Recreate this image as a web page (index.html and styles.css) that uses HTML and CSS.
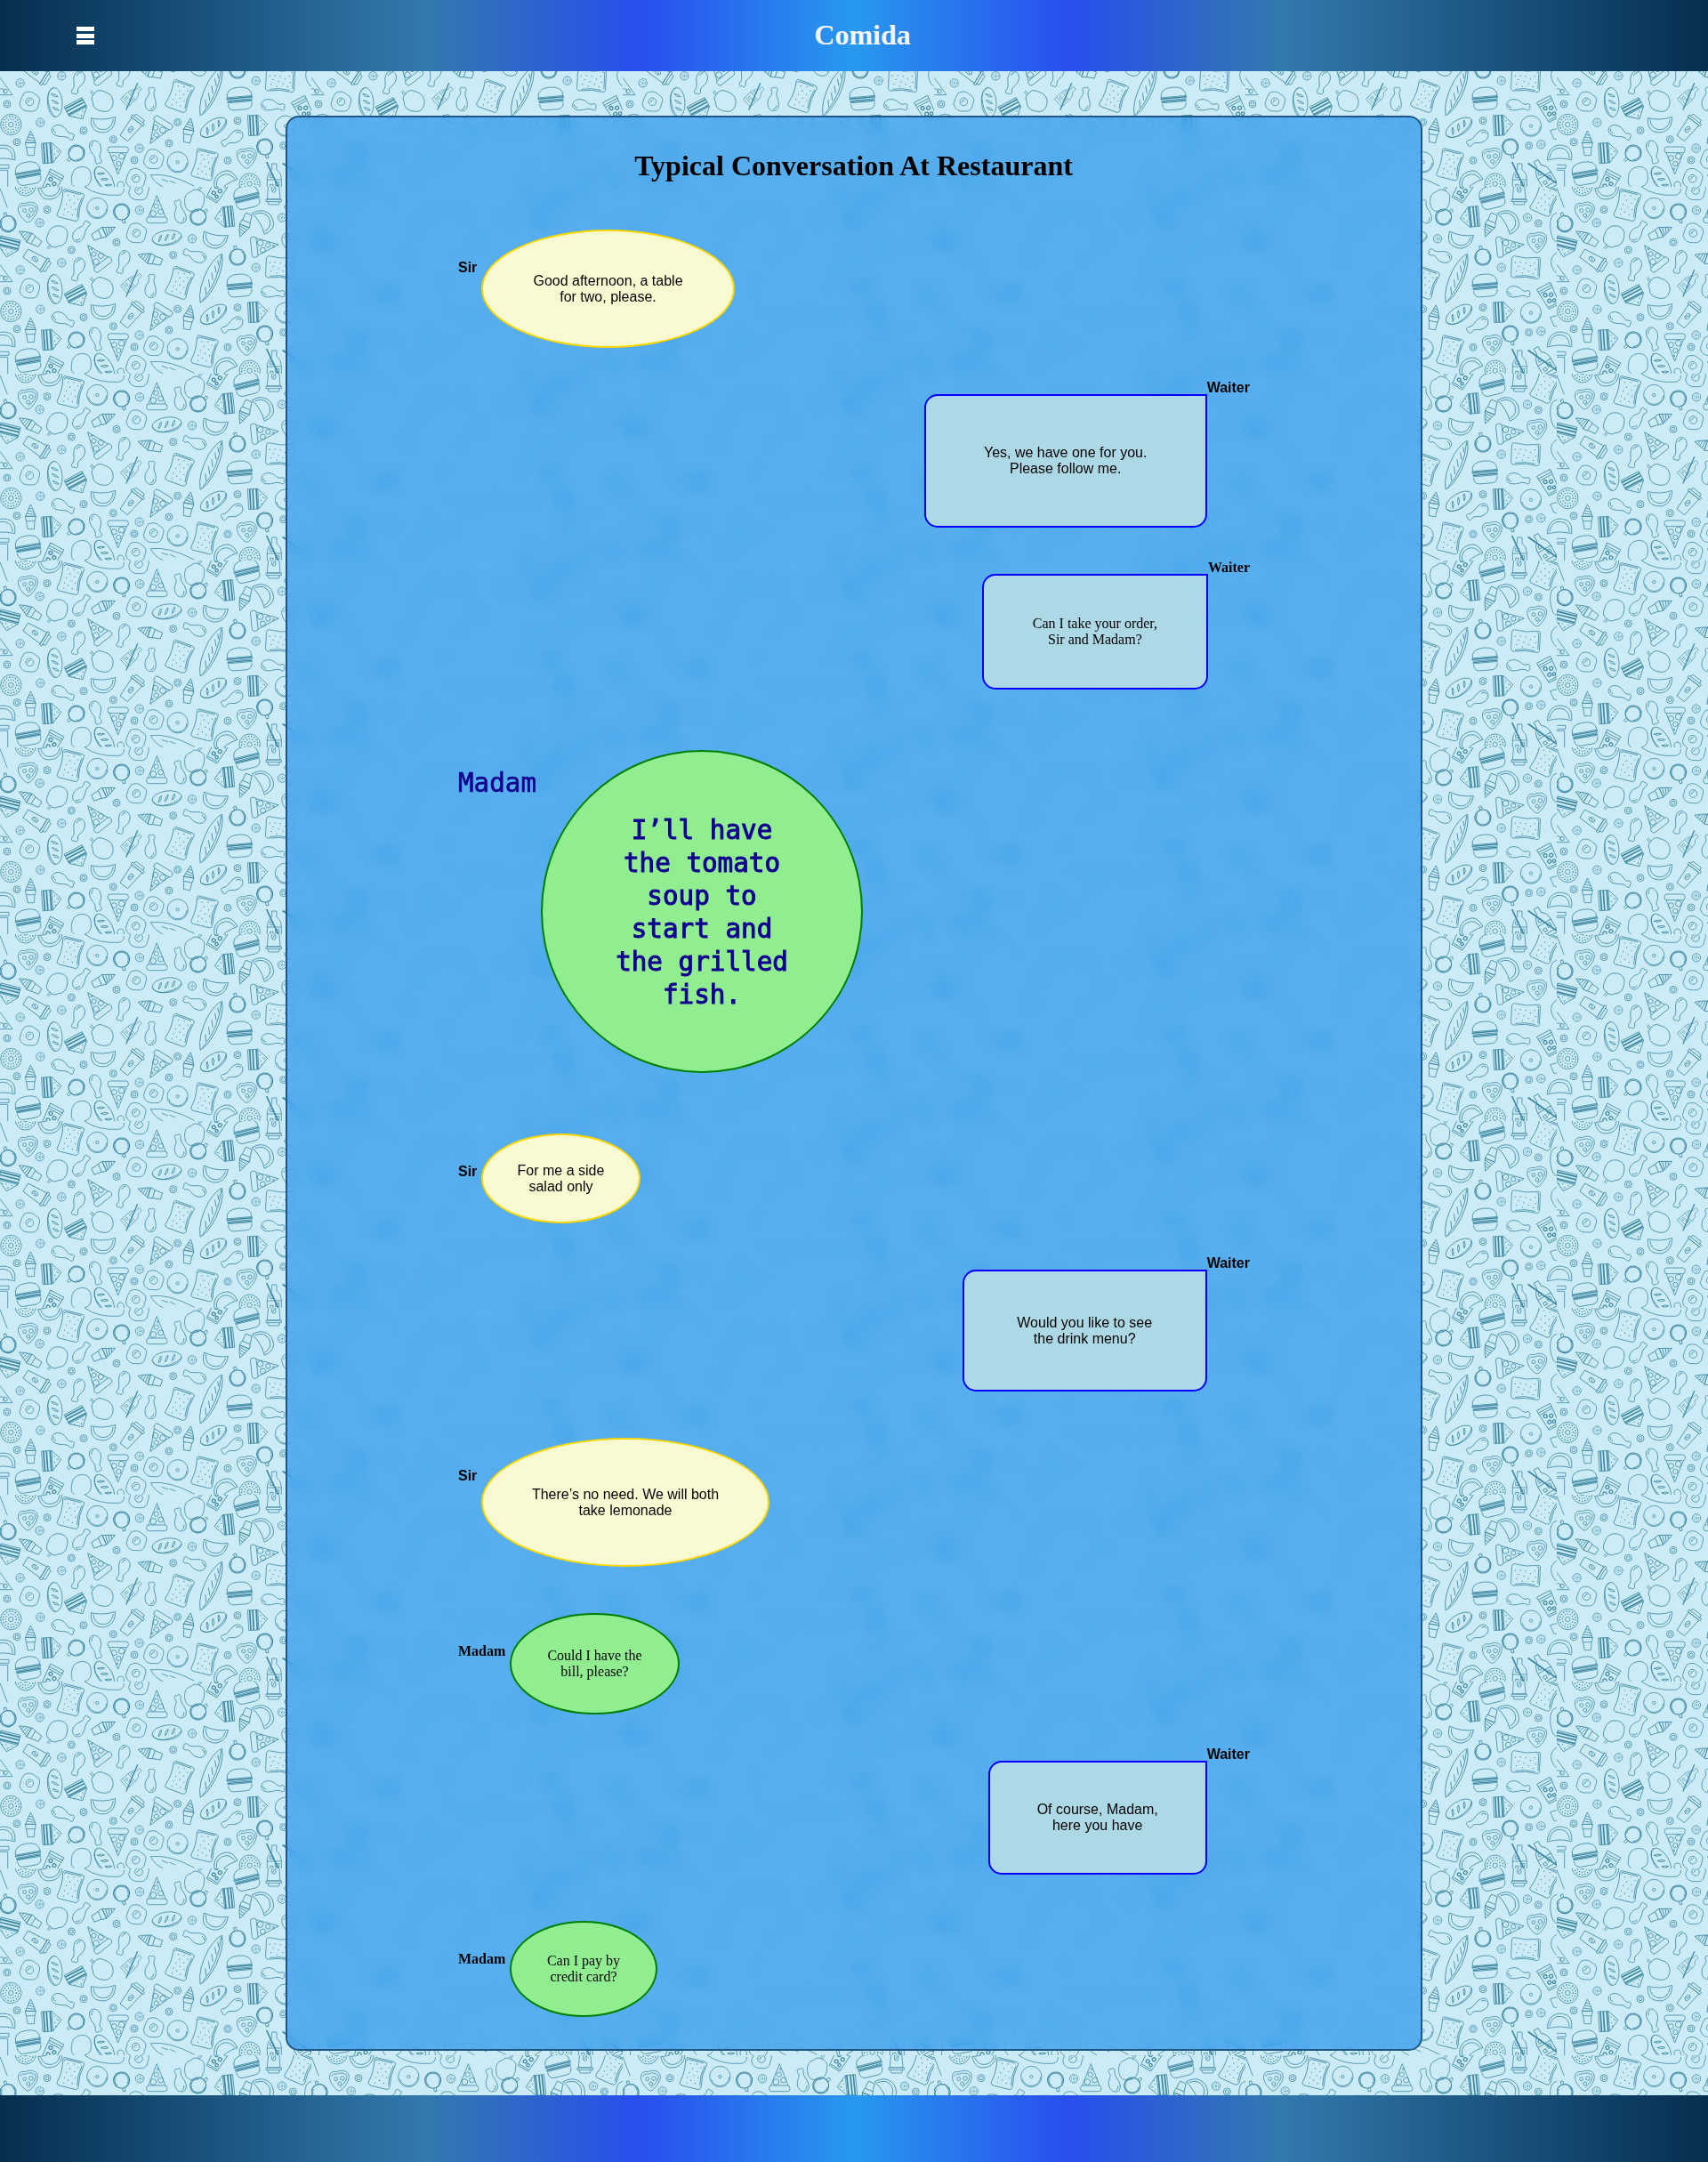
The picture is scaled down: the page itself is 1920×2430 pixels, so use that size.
FILE: index.html
```html
<!DOCTYPE html>
<html lang="en">
<head>
<meta charset="utf-8">
<title>Comida</title>
<link rel="stylesheet" href="styles.css">
</head>
<body>
<svg class="wallpaper" aria-hidden="true">
  <defs>
    <g id="ring"><circle r="12"/><circle r="6"/></g>
    <g id="ball"><circle r="14"/><circle r="8" stroke-dasharray="4 5"/><circle r="2"/></g>
    <g id="donut"><circle r="35"/><path d="M-30 8A31 31 0 0 0 31 2" /><circle r="5"/></g>
    <g id="sdonut"><circle r="35"/><circle r="8"/><circle r="27" stroke-dasharray="4 6" stroke-width="4"/><circle r="18" stroke-dasharray="3 6" stroke-width="4"/></g>
    <g id="cup"><circle r="27" stroke-width="3.5"/><path d="M-18 14A23 23 0 1 1 16 16M-5 27L-4 39H4V27"/></g>
    <g id="drum"><path d="M-19-18C-22-48 14-48 18-20C21 4 6 6 8 22C16 32 8 42 2 36C-6 44-14 34-8 24C-6 8-18 0-19-18M-12-22Q-12-34-2-36"/></g>
    <g id="toast"><path d="M-36-38Q-38-50-26-48L26-48Q40-48 36-36Q28 0 36 34Q38 48 26 48L-26 48Q-40 48-36 34Q-28 0-36-38"/><path d="M-31-36Q-32-44-24-43L26-43M31-34Q23 0 31 34"/><path d="M-18-30h3M2-34h3M18-26h3M-8-16h3M10-10h3M-16 0h3M2 6h3M18 10h3M-18 18h3M-4 24h3M12 30h3M-16 36h3" stroke-width="3.5"/></g>
    <g id="pizza"><path d="M0-52L-29 21M0-52L29 21"/><rect x="-35" y="21" width="70" height="20" rx="9"/><circle cx="-12" cy="9" r="10"/><circle cx="13" cy="3" r="9"/><circle cx="-2" cy="-16" r="8"/><circle cx="3" cy="-34" r="3"/></g>
    <g id="sand"><path d="M-33-34h34v68h-34zM1-34L32-2L1 34"/><path d="M-26-34v68M-16-34v68M-4-34v68" stroke-width="5"/><path d="M8-14h3M16-4h3M8 6h3M10 18h3M21-2h3" stroke-width="3.5"/></g>
    <g id="ice"><path d="M0-42L-17-2H17Q12-22 0-42M-10-22L12-16M-6-30L7-26M-13-12L16-8M-18-2H18L15 14H-15ZM-14 14L-10 41H12L14 14"/></g>
    <g id="taco"><path d="M-41-18Q0-12 40-30Q44 4 24 18Q8 32-20 24Q-40 16-41-18M-33-14Q-28 16 0 17Q32 16 34-22"/></g>
    <g id="egg"><path d="M-18-30Q4-40 20-24Q42-14 30 10Q28 36 0 32Q-28 34-34 8Q-28-18-18-30"/><circle r="13"/><path d="M-7 3Q-4-8 4-7"/></g>
    <g id="bread"><ellipse rx="50" ry="25"/><path d="M-50 0Q-40 28 4 21Q40 16 50 0M-30 10Q-26-8-18-12Q-18 4-30 10M-8 10Q-4-8 6-12Q4 4-8 10M16 8Q20-8 28-12Q28 4 16 8"/></g>
    <g id="bag"><path d="M-90 0Q-50-28 30-22Q76-14 90 0Q56 24-10 22Q-70 18-90 0M-80 4Q0 28 84 0M-56 6l22-12M-30 8l22-14M-4 8l22-14M24 8l20-14M50 5l14-9"/></g>
    <g id="burger"><path d="M-42-6Q-44-38 0-38Q42-38 42-6M-42-6H42Q46 2 40 4H-40Q-46 0-42-6M-42 12H42M-40 16Q-40 38-20 38H22Q40 36 40 16"/><path d="M-42-2H42M-42 8H42" stroke-width="4"/></g>
    <g id="coffee"><path d="M-22-26L-16 46H16L22-26ZM-26-26V-34H26V-26ZM-20-34L-17-44H17L20-34"/><ellipse cy="8" rx="7" ry="11"/><path d="M-3 14L3 2"/></g>
    <g id="soda"><path d="M-26-36H26L20 42H-20ZM-26-26H26M-22-18H22M-18 36H18"/><g stroke-width="3.5"><circle cx="-9" cy="-6" r="6"/><circle cx="9" cy="2" r="6"/><circle cx="-6" cy="18" r="6"/><circle cx="9" cy="24" r="5"/></g></g>
    <g id="jam"><path d="M-33-16Q-30-32-10-28Q14-40 30-22Q40 0 6 34Q-4 40-12 30Q-38 4-33-16M-27-12Q-24-24-10-20Q10-30 25-16Q28 2 0 26"/><circle cx="-12" cy="-4" r="6"/><circle cx="10" cy="-6" r="7"/><circle cy="12" r="6"/></g>
    <g id="pop"><path d="M-12 34Q-36 28-32 4Q-32-34 2-38Q32-38 34-10Q38 24 12 30Q0 42-12 34M-16 34L-24 46M-10 36L-18 48"/></g>
    <g id="bottle"><path d="M-8-50H8V-30Q24-18 24 0V50H-24V0Q-24-18-8-30ZM-24 4H24M-24 38H24M-14-14h10v10h-10zM4 12h12v12h-12zM-14 20h10v10h-10z"/><path d="M-26-56L30 64" stroke-width="5"/></g>
    <pattern id="food" width="350" height="210" patternUnits="userSpaceOnUse">
      <g class="doodle" transform="scale(.33333)">
        <path d="M285 0Q330 32 400 28Q420 24 418 6M0 5L25 70" />
        <use href="#sdonut" x="86" y="-5"/><use href="#taco" transform="translate(172 14) rotate(-12)"/>
        <use href="#toast" transform="translate(238 62) rotate(14)"/><use href="#jam" x="95" y="84"/>
        <use href="#ring" x="159" y="77"/><use href="#ball" x="134" y="121"/><use href="#donut" x="328" y="72"/>
        <use href="#cup" transform="translate(410 84) rotate(-14)"/><use href="#ball" x="471" y="79"/>
        <use href="#pizza" x="529" y="81"/><use href="#drum" transform="translate(605 83) rotate(170)"/>
        <use href="#cup" transform="translate(668 102) rotate(-128)"/><use href="#sand" transform="translate(755 102) rotate(174)"/>
        <use href="#ice" transform="translate(825 130) rotate(202)"/><use href="#taco" transform="translate(893 115) rotate(-112)"/>
        <use href="#ball" x="951" y="104"/><use href="#ring" x="988" y="123"/>
        <use href="#egg" x="468" y="12"/><use href="#pop" transform="translate(657 46) rotate(180)"/>
        <use href="#soda" transform="translate(735 8) rotate(30)"/><use href="#burger" transform="translate(832 34) rotate(-14)"/>
        <use href="#coffee" transform="translate(923 16) rotate(180)"/><use href="#toast" transform="translate(1010 44) rotate(24)"/>
        <use href="#cup" transform="translate(27 125) rotate(164)"/><use href="#ice" transform="translate(100 172) rotate(-58)"/>
        <use href="#pop" transform="translate(192 168) rotate(14)"/><use href="#drum" transform="translate(275 149) rotate(218)"/>
        <use href="#ice" transform="translate(350 153) rotate(66)"/><use href="#ring" x="393" y="187"/>
        <use href="#egg" x="460" y="156"/><use href="#bread" transform="translate(563 172) rotate(-8)"/>
        <use href="#ball" x="648" y="175"/><use href="#taco" transform="translate(722 180) rotate(18)"/>
        <use href="#sand" transform="translate(28 205) rotate(104)"/><use href="#coffee" transform="translate(125 248) rotate(122)"/>
        <use href="#ring" x="241" y="213"/><use href="#pizza" transform="translate(328 238) rotate(-38)"/>
        <use href="#drum" transform="translate(414 255) rotate(20)"/><use href="#ice" transform="translate(505 242) rotate(-72)"/>
        <use href="#ring" x="584" y="230"/><use href="#drum" transform="translate(655 231) rotate(112)"/>
        <use href="#bag" transform="translate(712 308) rotate(-66)"/><use href="#cup" transform="translate(801 237) rotate(166)"/>
        <use href="#ball" x="863" y="272"/><use href="#pizza" transform="translate(888 200) rotate(84)"/>
        <use href="#jam" x="984" y="186"/><path d="M1050 88Q1026 92 1028 136Q1032 180 1050 186"/>
        <use href="#toast" transform="translate(945 272) rotate(93)"/><path d="M1050 222Q1026 236 1032 264Q1038 284 1050 292"/>
        <use href="#ball" x="208" y="256"/><use href="#ball" x="68" y="280"/><use href="#drum" transform="translate(262 280) rotate(20)"/>
        <path d="M0 262L42 320H0M0 300Q16 296 14 312"/><circle cx="18" cy="308" r="7"/>
        <use href="#ring" x="24" y="351"/><use href="#egg" x="100" y="343"/>
        <use href="#bread" transform="translate(185 345) rotate(86)"/><use href="#sand" transform="translate(262 374) rotate(62)"/>
        <use href="#pop" transform="translate(345 340) rotate(106)"/><use href="#bottle" transform="translate(446 322) rotate(48) scale(.75)"/>
        <use href="#drum" transform="translate(509 333) rotate(186)"/><use href="#toast" transform="translate(606 324) rotate(20)"/>
        <use href="#burger" transform="translate(808 332) rotate(-5)"/><use href="#drum" transform="translate(922 356) rotate(-80)"/>
        <use href="#soda" transform="translate(1022 366) rotate(-28)"/>
        <use href="#sdonut" x="37" y="420"/><use href="#ball" x="136" y="413"/><use href="#drum" transform="translate(214 448) rotate(-64)"/>
        <use href="#ring" x="282" y="440"/><use href="#taco" transform="translate(346 420) rotate(6)"/>
        <use href="#coffee" transform="translate(446 430) rotate(38)"/><use href="#pizza" transform="translate(534 440) rotate(212)"/>
        <use href="#ring" x="599" y="412"/><use href="#ring" x="382" y="470"/><use href="#ice" transform="translate(636 440) rotate(10)"/>
        <use href="#bread" transform="translate(720 430) rotate(-32)"/><use href="#ring" x="801" y="407"/>
        <use href="#sand" transform="translate(870 422) rotate(-3)"/><use href="#donut" x="963" y="425"/>
        <use href="#ring" x="57" y="479"/><use href="#ice" x="103" y="483"/><use href="#sand" transform="translate(175 515) rotate(-4)"/>
        <use href="#cup" transform="translate(258 516) rotate(48)"/><use href="#drum" transform="translate(325 514) rotate(-12)"/>
        <use href="#ball" x="470" y="500"/><use href="#ring" x="570" y="483"/><use href="#drum" transform="translate(782 468) rotate(62)"/>
        <use href="#cup" transform="translate(893 495) rotate(-14)"/><use href="#ring" x="956" y="491"/><use href="#ball" x="997" y="487"/>
        <use href="#taco" transform="translate(12 516) rotate(188)"/><use href="#taco" transform="translate(1062 516) rotate(188)"/>
        <path d="M1050 470L1040 468L1028 440L1050 434"/>
        <use href="#pizza" transform="translate(398 536) rotate(180)"/><use href="#ring" x="453" y="540"/><use href="#egg" x="518" y="537"/>
        <use href="#donut" x="599" y="547"/><use href="#toast" transform="translate(690 555) rotate(14)"/>
        <use href="#ring" x="768" y="541"/><use href="#jam" x="833" y="532"/><use href="#burger" transform="translate(95 584) rotate(-10)"/>
        <use href="#soda" transform="translate(176 614) rotate(28)"/><use href="#pop" x="273" y="600"/>
        <use href="#bread" transform="translate(352 606) rotate(58)"/><use href="#egg" x="458" y="602"/>
        <path d="M508 590Q570 582 656 628M508 590Q520 616 550 630M545 604l22 8M572 610l20 8"/>
        <use href="#taco" transform="translate(756 606) rotate(154)"/><use href="#sdonut" x="842" y="620"/>
        <use href="#bottle" x="925" y="602"/><use href="#bottle" transform="translate(1006 588) rotate(-30) scale(1.05)"/>
        <path d="M0 556H30V568H0M0 574H26V630"/><path d="M398 630Q390 614 408 612Q420 614 418 630"/>
      </g>
    </pattern>
  </defs>
  <rect width="100%" height="100%" fill="#cbecf6"/>
  <rect width="100%" height="100%" fill="url(#food)"/>
</svg>

<header class="bar topbar">
  <button class="menu" aria-label="Menu"><span></span><span></span><span></span></button>
  <div class="brand">Comida</div>
</header>

<main class="card">
  <h1>Typical Conversation At Restaurant</h1>
  <div class="chat">
    <div class="row sir"><b>Sir</b><p style="width:285px;height:133px">Good afternoon, a table<br>for two, please.</p></div>
    <div class="row waiter"><b>Waiter</b><p style="width:318px;height:150px">Yes, we have one for you.<br>Please follow me.</p></div>
    <div class="row waiter serif"><b>Waiter</b><p style="width:254px;height:130px">Can I take your order,<br>Sir and Madam?</p></div>
    <div class="row madam large"><b>Madam</b><p style="width:362px;height:363px">I’ll have<br>the tomato<br>soup to<br>start and<br>the grilled<br>fish.</p></div>
    <div class="row sir"><b>Sir</b><p style="width:179px;height:101px">For me a side<br>salad only</p></div>
    <div class="row waiter"><b>Waiter</b><p style="width:275px;height:137px">Would you like to see<br>the drink menu?</p></div>
    <div class="row sir"><b>Sir</b><p style="width:324px;height:145px">There’s no need. We will both<br>take lemonade</p></div>
    <div class="row madam serif"><b>Madam</b><p style="width:191px;height:114px">Could I have the<br>bill, please?</p></div>
    <div class="row waiter"><b>Waiter</b><p style="width:246px;height:128px">Of course, Madam,<br>here you have</p></div>
    <div class="row madam serif"><b>Madam</b><p style="width:166px;height:108px">Can I pay by<br>credit card?</p></div>
  </div>
</main>

<footer class="bar bottombar"></footer>
</body>
</html>
```
FILE: styles.css
```css
* {
  box-sizing: border-box;
}

body {
  position: relative;
  margin: 0;
  height: 2430px;
  font: 16px/18px "Liberation Sans", Arial, sans-serif;
  color: #000;
}

.wallpaper {
  position: absolute;
  inset: 0;
  width: 100%;
  height: 100%;
  z-index: -1;
}

.doodle {
  fill: none;
  stroke: #3a849f;
  stroke-width: 2.3;
  stroke-linejoin: round;
}

.bar {
  background: linear-gradient(90deg, #052e4f 0%, #3279ae 25%, #284eee 37.5%, #2899ee 50%, #284eee 62.5%, #3279ae 75%, #052e4f 100%);
}

.topbar {
  display: flex;
  align-items: center;
  height: 80px;
  padding-left: 86px;
}

.menu {
  display: flex;
  flex-direction: column;
  justify-content: space-between;
  width: 20px;
  height: 20px;
  padding: 0;
  border: 0;
  background: none;
}

.menu span {
  height: 5px;
  background: #fff;
}

.brand {
  flex: 1;
  padding: 0 87px 1px 0;
  text-align: center;
  font: bold 32px/37px "Liberation Serif", "Times New Roman", serif;
  color: whitesmoke;
}

.card {
  width: 1278px;
  height: 2175px;
  margin: 50px auto;
  padding: 36px 192px 0 191px;
  border: 2px solid #1f5687;
  border-radius: 15px;
  background: rgba(30, 146, 238, .65);
  backdrop-filter: blur(9px);
}

h1 {
  margin: 0 0 53px;
  text-align: center;
  font: bold 32px/37px "Liberation Serif", "Times New Roman", serif;
}

.chat {
  display: flex;
  flex-direction: column;
  gap: 52px;
}

.row {
  display: flex;
  align-items: flex-start;
}

.row p {
  display: flex;
  align-items: center;
  justify-content: center;
  margin: 0;
  text-align: center;
  border: 2px solid;
}

.serif {
  font-family: "Liberation Serif", "Times New Roman", serif;
}

.sir b {
  width: 27px;
  padding: 34px 0 0 1px;
}

.sir p {
  border-color: gold;
  border-radius: 50%;
  background: lightgoldenrodyellow;
}

.madam b {
  width: 59px;
  padding: 34px 0 0 1px;
}

.madam p {
  border-color: green;
  border-radius: 50%;
  background: lightgreen;
}

.waiter {
  flex-direction: row-reverse;
}

.waiter b {
  margin-top: -16px;
}

.waiter p {
  border-color: blue;
  border-radius: 15px 0 15px 15px;
  background: lightblue;
}

.large {
  margin: 16px 0;
  font: 29.25px/37px "DejaVu Sans Mono", monospace;
  color: #12008f;
  -webkit-text-stroke: 1px #12008f;
}

.large b {
  width: 94px;
  padding-top: 19px;
  font-weight: normal;
  -webkit-text-stroke-width: .6px;
}

.large p {
  padding-top: 3px;
}

.bottombar {
  height: 75px;
}
```
